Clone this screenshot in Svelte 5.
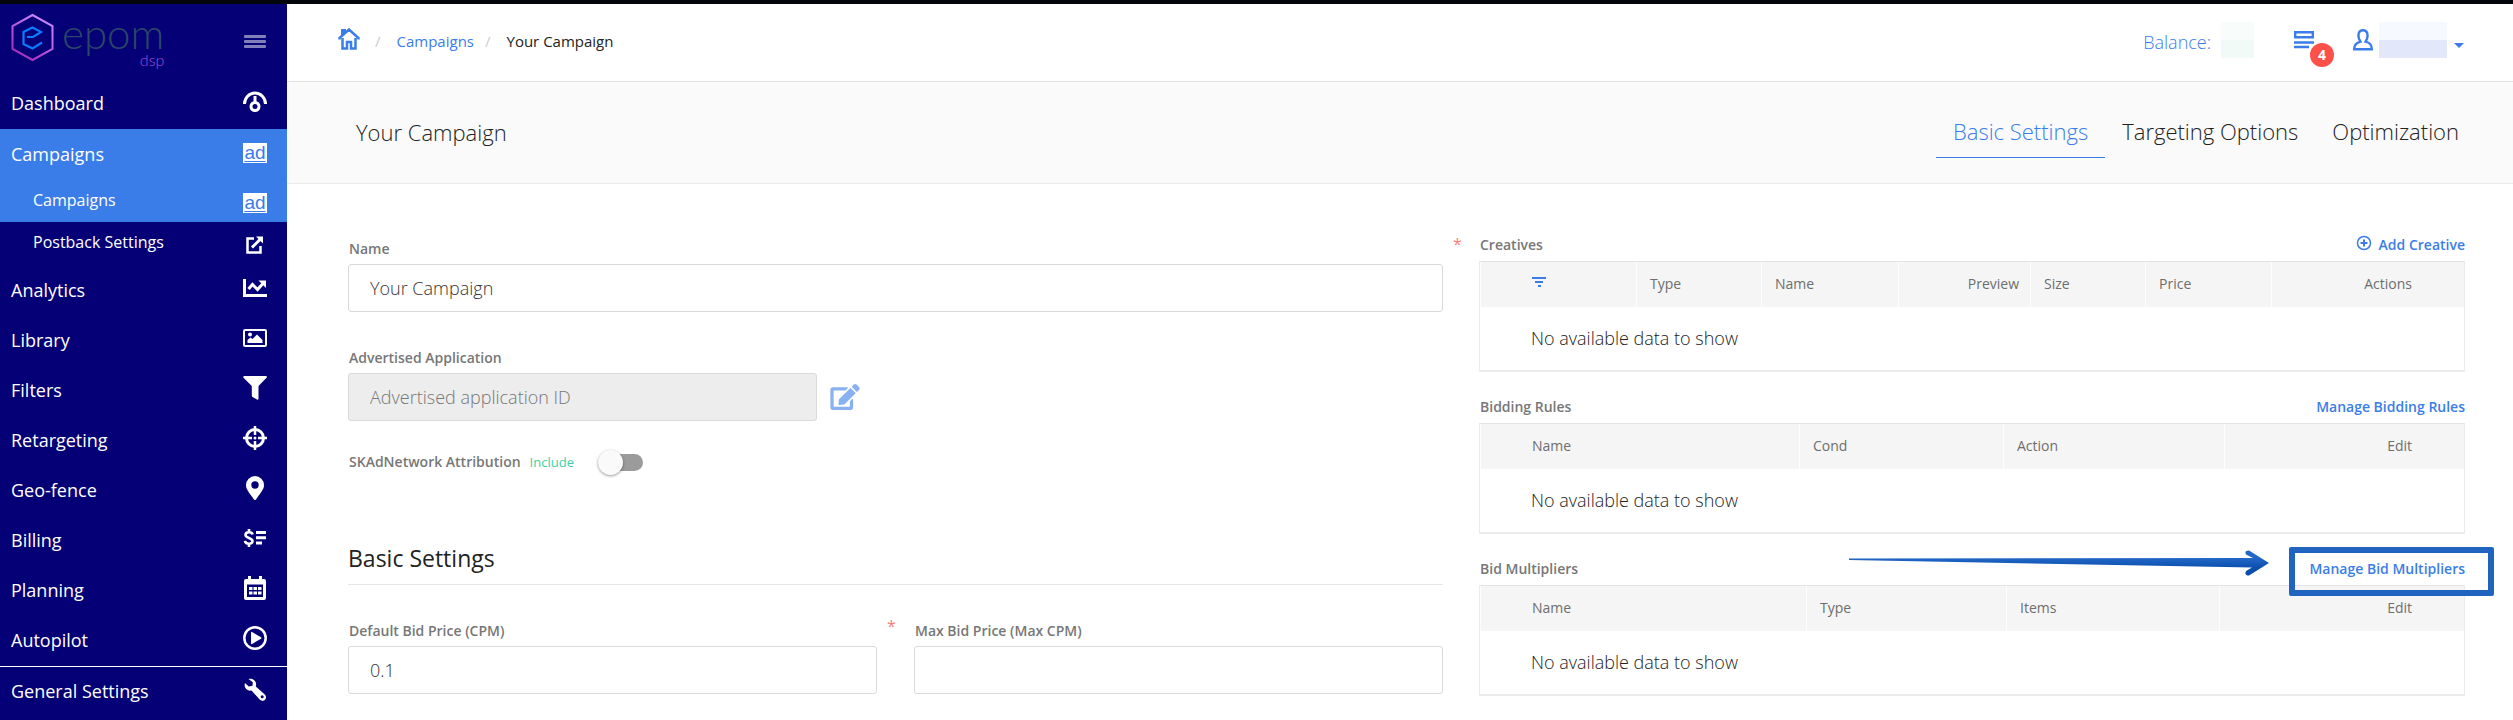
<script>
    let name = $state('Your Campaign')
    let bidPrice = $state('0.1')
    let maxBidPrice = $state('')
    let include = $state(false)
    let activeTab = $state('Basic Settings')

    const tabs = ['Basic Settings', 'Targeting Options', 'Optimization']

    const menu = [
        { label: 'Dashboard', icon: 'gauge' },
        {
            label: 'Campaigns',
            icon: 'ad',
            active: true,
            children: [
                { label: 'Campaigns', icon: 'ad', active: true },
                { label: 'Postback Settings', icon: 'external' },
            ],
        },
        { label: 'Analytics', icon: 'chart' },
        { label: 'Library', icon: 'image' },
        { label: 'Filters', icon: 'filter' },
        { label: 'Retargeting', icon: 'target' },
        { label: 'Geo-fence', icon: 'pin' },
        { label: 'Billing', icon: 'billing' },
        { label: 'Planning', icon: 'calendar' },
        { label: 'Autopilot', icon: 'play' },
        { label: 'General Settings', icon: 'wrench', divider: true },
    ]

    // column sizes are relative, they get turned into percentages
    const panels = [
        {
            title: 'Creatives',
            action: 'Add Creative',
            add: true,
            columns: [
                { filter: true, size: 156 },
                { label: 'Type', size: 125 },
                { label: 'Name', size: 137 },
                { label: 'Preview', size: 132, right: true },
                { label: 'Size', size: 115 },
                { label: 'Price', size: 126 },
                { label: 'Actions', size: 193 },
            ],
        },
        {
            title: 'Bidding Rules',
            action: 'Manage Bidding Rules',
            columns: [
                { label: 'Name', size: 319 },
                { label: 'Cond', size: 204 },
                { label: 'Action', size: 221 },
                { label: 'Edit', size: 240 },
            ],
        },
        {
            title: 'Bid Multipliers',
            action: 'Manage Bid Multipliers',
            highlight: true,
            columns: [
                { label: 'Name', size: 326 },
                { label: 'Type', size: 200 },
                { label: 'Items', size: 213 },
                { label: 'Edit', size: 245 },
            ],
        },
    ]

    const colWidth = (columns, size) => (size / columns.reduce((sum, c) => sum + c.size, 0)) * 100
</script>

{#snippet menuIcon(icon)}
    {#if icon === 'ad'}
        <span class="ad-icon" aria-hidden="true">ad</span>
    {:else}
        <svg class="menu-icon" viewBox="0 0 24 24" aria-hidden="true">
            {#if icon === 'gauge'}
                <path d="M1.5 15A10.5 11 0 0 1 22.5 15M12 7v7" fill="none" stroke="#fff" stroke-width="3" />
                <circle cx="12" cy="17.5" r="4" fill="none" stroke="#fff" stroke-width="3" />
            {:else if icon === 'external'}
                <path d="M11 5.5H4.5v14h13V13" fill="none" stroke="#fff" stroke-width="2.5" />
                <path d="M9 14.5L18 5.5" stroke="#fff" stroke-width="3" />
                <path d="M13 3.5h7v7z" fill="#fff" />
            {:else if icon === 'chart'}
                <path d="M1.5 3v16.5H24" fill="none" stroke="#fff" stroke-width="3" />
                <path d="M5.5 13l4-4.5 5 5 5.5-6" fill="none" stroke="#fff" stroke-width="3" />
                <path d="M15.5 4.5H23V12z" fill="#fff" />
            {:else if icon === 'image'}
                <rect x="1" y="4" width="22" height="16" rx="1" fill="none" stroke="#fff" stroke-width="2" />
                <circle cx="7" cy="8.5" r="2" fill="#fff" />
                <path d="M4.5 17v-3l3-2.5 2 1.5 4.5-4.5 5.5 5.5v3z" fill="#fff" />
            {:else if icon === 'filter'}
                <path d="M1 0h22q1.5 .5.5 1.8L15.5 10v13q-.5 1.2-1.6.5L9.5 21 8.8 20V10L.5 1.8Q-.2.5 1 0z" fill="#fff" />
            {:else if icon === 'target'}
                <circle cx="12" cy="12" r="8.5" fill="none" stroke="#fff" stroke-width="3" />
                <path d="M12 0v9M12 15v9M0 12h9M15 12h9" stroke="#fff" stroke-width="2.5" />
                <circle cx="12" cy="12" r="1.5" fill="#fff" />
            {:else if icon === 'pin'}
                <path fill-rule="evenodd" d="M12 0a9 9 0 0 0-9 9c0 4 2 6 8 14.5q1 1 2 0C19 15 21 13 21 9a9 9 0 0 0-9-9zm0 5.3a3.7 3.7 0 1 1 0 7.4 3.7 3.7 0 0 1 0-7.4z" fill="#fff" />
            {:else if icon === 'billing'}
                <path d="M9.5 8.5C9 5.5 2.5 5.5 2.5 9c0 3.5 7 2.5 7 6.2 0 3.6-7 3.5-7.5-.4M6 3v3M6 18v3" fill="none" stroke="#fff" stroke-width="2.6" />
                <path d="M13 6.5h10M13 11.8h10M13 17h6" stroke="#fff" stroke-width="3" />
            {:else if icon === 'calendar'}
                <path fill-rule="evenodd" d="M5 0h3v3h8V0h3v3h2q2 0 2 2v17q0 2-2 2H3q-2 0-2-2V5q0-2 2-2h2zM4 8.5V21h16V8.5z" fill="#fff" />
                <path d="M6 12.5h3.5M10.5 12.5h3.5M15 12.5h3.5M6 17h3.5M10.5 17h3.5M15 17h3.5" stroke="#fff" stroke-width="3.2" />
            {:else if icon === 'play'}
                <circle cx="12" cy="12" r="10.7" fill="none" stroke="#fff" stroke-width="2.5" />
                <path d="M8 6.5q0-1 1-.5l9 5.2q1 .8 0 1.6L9 18q-1 .5-1-.5z" fill="#fff" />
            {:else if icon === 'wrench'}
                <path fill-rule="evenodd" d="M5.5 2C9.5.5 14.5 4 12.8 9.5l8.7 7.8a3.6 3.6 0 1 1-5 5L8.5 13.5C4 14.5.5 10.5 2 6l3.8 3.5 3.7-.8.3-3.5zm13.7 16.3a1.5 1.5 0 1 0 0 3 1.5 1.5 0 0 0 0-3z" fill="#fff" />
            {/if}
        </svg>
    {/if}
{/snippet}

<div class="app">
    <nav class="sidebar">
        <div class="brand">
            <a class="logo" href="#home">
                <svg width="43" height="49" viewBox="0 0 43 49" aria-hidden="true">
                    <defs>
                        <linearGradient id="hex" x1="0" y1="1" x2="0.6" y2="0">
                            <stop offset="0" stop-color="#a31fb4" />
                            <stop offset="1" stop-color="#c686ff" />
                        </linearGradient>
                    </defs>
                    <path d="M21.5 2L41.5 13v23L21.5 47 1.5 36V13z" fill="none" stroke="url(#hex)" stroke-width="2" />
                    <path d="M16 24l6 0 8-5-8.5-4.5L12.5 19v12l9 4.5 9.5-6" fill="none" stroke="#0a7cff" stroke-width="2.2" />
                </svg>
                <span class="logo-text">
                    <span class="logo-name">epom</span>
                    <span class="logo-sub">dsp</span>
                </span>
            </a>
            <button class="burger" aria-label="Toggle menu"><span></span><span></span><span></span></button>
        </div>

        {#each menu as item}
            {#if item.children}
                <div class="group">
                    <a class="menu-item active" href="#{item.label}">{item.label}{@render menuIcon(item.icon)}</a>
                    {#each item.children as child}
                        <a class="menu-item sub" class:active={child.active} href="#{child.label}">
                            {child.label}{@render menuIcon(child.icon)}
                        </a>
                    {/each}
                </div>
            {:else}
                <a class="menu-item" class:divider={item.divider} href="#{item.label}">
                    {item.label}{@render menuIcon(item.icon)}
                </a>
            {/if}
        {/each}
    </nav>

    <div class="content">
        <header class="topbar">
            <div class="breadcrumbs">
                <a href="#home" aria-label="Home">
                    <svg class="home" width="22" height="22" viewBox="0 0 22 22" aria-hidden="true">
                        <path d="M4.5 10v10.5h4.5V14h4v6.5h4.5V10M1.5 11.5v-1.5L11 1.5l9.5 8.5v1.5" fill="none" stroke="#3b7de8" stroke-width="2.5" />
                        <path d="M3 1h5v3L3 8z" fill="#3b7de8" />
                    </svg>
                </a>
                <span class="slash">/</span>
                <a href="#campaigns">Campaigns</a>
                <span class="slash">/</span>
                <span>Your Campaign</span>
            </div>
            <div class="account">
                <span class="balance">Balance:</span>
                <span class="balance-value"></span>
                <button class="news" aria-label="Notifications">
                    <svg width="20" height="18" viewBox="0 0 20 18" aria-hidden="true">
                        <path d="M1.2 1.2h17.6v5H1.2z" fill="none" stroke="#3b7de8" stroke-width="2.4" />
                        <path d="M0 11.5h20M0 16h15" stroke="#3b7de8" stroke-width="2.4" />
                    </svg>
                    <span class="badge">4</span>
                </button>
                <button class="user" aria-label="Account">
                    <svg width="20" height="22" viewBox="0 0 20 22" aria-hidden="true">
                        <path d="M10 1.2c5 0 5 5 4 8.5l-1.5 3c4 1 6.3 2.5 6.3 7.6H1.2c0-5 2.3-6.6 6.3-7.6L6 9.7c-1-3.5-1-8.5 4-8.5z" fill="none" stroke="#3b7de8" stroke-width="2.4" />
                    </svg>
                    <span class="user-name"></span>
                    <span class="caret"></span>
                </button>
            </div>
        </header>

        <div class="titlebar">
            <h1>Your Campaign</h1>
            <div class="tabs">
                {#each tabs as tab}
                    <button class="tab" class:current={tab === activeTab} onclick={() => (activeTab = tab)}>{tab}</button>
                {/each}
            </div>
        </div>

        <main>
            <form>
                <div class="field required">
                    <label for="name">Name</label>
                    <input id="name" type="text" bind:value={name}>
                </div>
                <div class="field app-field">
                    <label for="application">Advertised Application</label>
                    <div class="app-row">
                        <input id="application" type="text" placeholder="Advertised application ID" disabled>
                        <button type="button" class="edit" aria-label="Edit application">
                            <svg width="30" height="26" viewBox="0 0 576 512" aria-hidden="true">
                                <path fill="#3b7de8" d="M402.6 83.2l90.2 90.2c3.8 3.8 3.8 10 0 13.8L274.4 405.6l-92.8 10.3c-12.4 1.4-22.9-9.1-21.5-21.5l10.3-92.8L388.8 83.2c3.8-3.8 10-3.8 13.8 0zm162-22.9l-48.8-48.8c-15.2-15.2-39.9-15.2-55.2 0l-35.4 35.4c-3.8 3.8-3.8 10 0 13.8l90.2 90.2c3.8 3.8 10 3.8 13.8 0l35.4-35.4c15.2-15.3 15.2-40 0-55.2zM384 346.2V448H64V128h229.8c3.2 0 6.2-1.3 8.5-3.5l40-40c7.6-7.6 2.2-20.5-8.5-20.5H48C21.5 64 0 85.5 0 112v352c0 26.5 21.5 48 48 48h352c26.5 0 48-21.5 48-48V306.2c0-10.7-12.9-16-20.5-8.5l-40 40c-2.2 2.3-3.5 5.3-3.5 8.5z" />
                            </svg>
                        </button>
                    </div>
                </div>
                <div class="switch-row">
                    <label for="skad">SKAdNetwork Attribution</label>
                    <span class="include">Include</span>
                    <input id="skad" class="switch" type="checkbox" role="switch" bind:checked={include}>
                </div>

                <h2>Basic Settings</h2>
                <div class="pair">
                    <div class="field required">
                        <label for="bid">Default Bid Price (CPM)</label>
                        <input id="bid" type="text" bind:value={bidPrice}>
                    </div>
                    <div class="field">
                        <label for="maxbid">Max Bid Price (Max CPM)</label>
                        <input id="maxbid" type="text" bind:value={maxBidPrice}>
                    </div>
                </div>
            </form>

            <div class="panels">
                {#each panels as panel}
                    <section class="panel">
                        <div class="panel-head">
                            <h3>{panel.title}</h3>
                            <a class="action" href="#{panel.title}">
                                {#if panel.add}
                                    <svg width="16" height="16" viewBox="0 0 16 16" aria-hidden="true">
                                        <path d="M8 4.5v7M4.5 8h7" stroke="#3b7de8" stroke-width="2" />
                                        <circle cx="8" cy="8" r="6.5" fill="none" stroke="#3b7de8" stroke-width="1.5" />
                                    </svg>
                                {/if}
                                {panel.action}
                            </a>
                            {#if panel.highlight}
                                <svg class="arrow" width="420" height="26" viewBox="0 0 420 26" aria-hidden="true">
                                    <defs>
                                        <linearGradient id="shaft" x1="0" y1="0" x2="0" y2="1">
                                            <stop offset="0.3" stop-color="#2266c6" />
                                            <stop offset="0.7" stop-color="#0b4fae" />
                                        </linearGradient>
                                    </defs>
                                    <path d="M0 8.5L404 8l-7-3.5q-2-4 3-4L420 13l-20 12.5q-5 0-3-4.5l6-3.5L0 10z" fill="url(#shaft)" />
                                </svg>
                                <span class="highlight"></span>
                            {/if}
                        </div>
                        <table>
                            <colgroup>
                                {#each panel.columns as col}
                                    <col style="width: {colWidth(panel.columns, col.size)}%">
                                {/each}
                            </colgroup>
                            <thead>
                                <tr>
                                    {#each panel.columns as col}
                                        <th class:right={col.right}>
                                            {#if col.filter}
                                                <svg class="filter" width="14" height="10" viewBox="0 0 14 10" aria-label="Filter">
                                                    <path d="M0 1h14M3 5h8M6 9h3" stroke="#3b7de8" stroke-width="2" />
                                                </svg>
                                            {:else}
                                                {col.label}
                                            {/if}
                                        </th>
                                    {/each}
                                </tr>
                            </thead>
                            <tbody>
                                <tr><td colspan={panel.columns.length}>No available data to show</td></tr>
                            </tbody>
                        </table>
                    </section>
                {/each}
            </div>
        </main>
    </div>
</div>

<style>
    :global(body) {
        background: #fff;
    }
    * {
        box-sizing: border-box;
    }
    .app {
        display: flex;
        min-height: 100vh;
        border-top: 4px solid #02050c;
        font-family: "Open Sans", sans-serif;
        font-size: 16px;
        color: #222;
    }
    a {
        color: #3b7de8;
        text-decoration: none;
    }
    button {
        padding: 0;
        border: none;
        background: none;
        font-family: inherit;
        cursor: pointer;
    }
    h1, h2, h3 {
        margin: 0;
        font-weight: 400;
    }
    svg {
        flex: none;
    }

    /* sidebar */
    .sidebar {
        flex: none;
        width: 287px;
        background: #050075;
    }
    .brand {
        display: flex;
        justify-content: space-between;
        align-items: flex-start;
        height: 75px;
        padding: 9px 21px 0 11px;
    }
    .logo {
        display: flex;
        gap: 8px;
    }
    .logo-text {
        display: flex;
        flex-direction: column;
        align-items: flex-end;
        font-family: Lato, sans-serif;
        font-weight: 300;
    }
    .logo-name {
        font-size: 42px;
        line-height: 40px;
        color: #2c4668;
    }
    .logo-sub {
        font-size: 16px;
        line-height: 14px;
        color: #a050de;
    }
    .burger {
        display: flex;
        flex-direction: column;
        gap: 2px;
        width: 22px;
        margin-top: 22px;
    }
    .burger span {
        width: 100%;
        height: 3px;
        border-radius: 1px;
        background: #8280ba;
    }
    .menu-item {
        display: flex;
        justify-content: space-between;
        align-items: center;
        height: 50px;
        padding: 0 20px 2px 11px;
        font-size: 18px;
        color: #fff;
    }
    .menu-item.active {
        background: #3a7de8;
    }
    .menu-item.divider {
        height: 51px;
        border-top: 1px solid #fff;
    }
    .group {
        margin-bottom: 2px;
    }
    .group > .menu-item:first-child {
        height: 51px;
    }
    .menu-item.sub {
        height: 42px;
        padding-left: 33px;
        font-size: 16px;
    }
    .menu-icon {
        width: 24px;
        height: 24px;
        margin-bottom: 4px;
    }
    .ad-icon {
        width: 24px;
        height: 20px;
        margin-bottom: 2px;
        background: #fff;
        color: #3a7de8;
        font-family: "Liberation Sans", sans-serif;
        font-size: 19px;
        line-height: 20px;
        text-align: center;
        text-decoration: underline;
        text-decoration-thickness: 1px;
        text-underline-offset: 2px;
    }
    .sub .menu-icon,
    .sub .ad-icon {
        margin: 6px 0 0;
    }

    /* top bar */
    .content {
        flex: 1;
        min-width: 0;
    }
    .topbar {
        display: flex;
        justify-content: space-between;
        align-items: flex-start;
        height: 78px;
        padding: 0 49px 0 51px;
        border-bottom: 1px solid #e2e2e2;
    }
    .breadcrumbs {
        display: flex;
        align-items: center;
        padding-top: 24px;
        font-size: 15px;
        line-height: 24px;
    }
    .home {
        display: block;
        margin: 0 4px 4px 0;
    }
    .slash {
        margin: 0 16px 0 11px;
        color: #ccc;
    }
    .account {
        display: flex;
        align-items: center;
        height: 72px;
        color: #3b7de8;
    }
    .balance {
        padding-top: 3px;
        font-size: 18px;
        font-weight: 300;
    }
    .balance-value {
        width: 33px;
        height: 36px;
        margin: 0 40px 0 10px;
        background: linear-gradient(#f8fdfc 50%, #f2faf8 50%);
    }
    .news {
        position: relative;
        margin-right: 39px;
    }
    .news svg {
        display: block;
    }
    .badge {
        position: absolute;
        left: 16px;
        top: 12px;
        width: 24px;
        height: 24px;
        border-radius: 50%;
        background: #fc5049;
        color: #fff;
        font-size: 14px;
        font-weight: 700;
        line-height: 24px;
    }
    .user {
        display: flex;
        align-items: center;
    }
    .user-name {
        width: 68px;
        height: 36px;
        margin: 0 7px 0 6px;
        background: linear-gradient(#f6f9ff 50%, #e2e8fa 50%);
    }
    .caret {
        border: 5px solid transparent;
        border-top-color: #3b7de8;
        border-bottom: none;
        margin-top: 10px;
    }

    .titlebar {
        display: flex;
        justify-content: space-between;
        align-items: flex-start;
        height: 102px;
        padding: 28px 37px 0 69px;
        border-bottom: 1px solid #ececec;
        background: #fafafa;
    }
    h1 {
        font-size: 22px;
        font-weight: 300;
        line-height: 44px;
    }
    .tabs {
        display: flex;
    }
    .tab {
        height: 48px;
        padding: 0 17px 5px;
        border-bottom: 1px solid transparent;
        color: #222;
        font-size: 22px;
        font-weight: 300;
    }
    .tab.current {
        border-color: #3b7de8;
        color: #3b7de8;
    }

    /* form */
    main {
        display: grid;
        grid-template-columns: 1095fr 986fr;
        gap: 36px;
        padding: 51px 48px 24px 61px;
    }
    form {
        padding-top: 4px;
    }
    .field {
        position: relative;
    }
    label, h3 {
        padding-left: 1px;
        font-size: 14px;
        font-weight: 600;
        line-height: 20px;
        color: #777;
    }
    .field label {
        display: block;
        margin-bottom: 5px;
    }
    .required::after {
        content: "*";
        position: absolute;
        left: 100%;
        top: -6px;
        margin-left: 10px;
        color: #ff7d78;
        font-size: 16px;
    }
    input[type="text"] {
        display: block;
        width: 100%;
        height: 48px;
        padding: 0 21px;
        border: 1px solid #d9d9d9;
        border-radius: 3px;
        background: #fff;
        color: #333;
        font-family: inherit;
        font-size: 18px;
        font-weight: 300;
    }
    input[type="text"]:disabled {
        width: 469px;
        background: #ededed;
    }
    input::placeholder {
        color: #777;
        opacity: 1;
    }
    .app-field {
        margin-top: 36px;
    }
    .app-row {
        display: flex;
        align-items: center;
        gap: 13px;
    }
    .edit {
        opacity: 0.6;
    }
    .edit svg {
        display: block;
    }
    .switch-row {
        display: flex;
        align-items: center;
        height: 26px;
        margin-top: 28px;
    }
    .include {
        margin: 0 24px 0 9px;
        font-size: 13px;
        color: #3ecfa6;
    }
    .switch {
        position: relative;
        appearance: none;
        width: 45px;
        height: 17px;
        margin: 0;
        border-radius: 9px;
        background: #9b9b9b;
    }
    .switch::before {
        content: "";
        position: absolute;
        left: 0;
        top: -4px;
        width: 25px;
        height: 25px;
        border-radius: 50%;
        background: #fafafa;
        box-shadow: 0 1px 3px rgba(0, 0, 0, 0.4);
    }
    .switch:checked::before {
        left: 20px;
    }
    h2 {
        margin-top: 66px;
        padding-bottom: 9px;
        border-bottom: 1px solid #e6e6e6;
        font-size: 23px;
        line-height: 34px;
    }
    .pair {
        display: grid;
        grid-template-columns: 1fr 1fr;
        gap: 37px;
        margin-top: 36px;
    }

    /* panels */
    .panels {
        display: flex;
        flex-direction: column;
        gap: 25px;
        min-width: 0;
    }
    .panel-head {
        position: relative;
        display: flex;
        justify-content: space-between;
        margin-bottom: 6px;
    }
    .action {
        display: flex;
        gap: 7px;
        font-size: 14px;
        font-weight: 600;
        line-height: 20px;
    }
    .arrow {
        position: absolute;
        right: 196px;
        top: -9px;
    }
    .highlight {
        position: absolute;
        right: -29px;
        top: -12px;
        width: 205px;
        height: 49px;
        border: 6px solid #2064c0;
        border-radius: 2px;
        pointer-events: none;
    }
    table {
        width: 100%;
        table-layout: fixed;
        border: 1px solid #ececec;
        border-top-color: #e2e2e2;
        border-bottom-width: 2px;
        border-spacing: 0;
    }
    th {
        height: 45px;
        padding: 0 13px 2px;
        border-left: 1px solid #fdfdfd;
        background: #f5f5f5;
        color: #6e6e6e;
        font-size: 14px;
        font-weight: 400;
        text-align: left;
    }
    th:first-child,
    td {
        padding: 0 0 2px 51px;
    }
    th:last-child {
        padding-right: 52px;
        text-align: right;
    }
    th.right {
        padding-right: 11px;
        text-align: right;
    }
    td {
        height: 63px;
        font-size: 18px;
        font-weight: 300;
    }
    .filter {
        display: block;
        margin-bottom: 4px;
    }
</style>
